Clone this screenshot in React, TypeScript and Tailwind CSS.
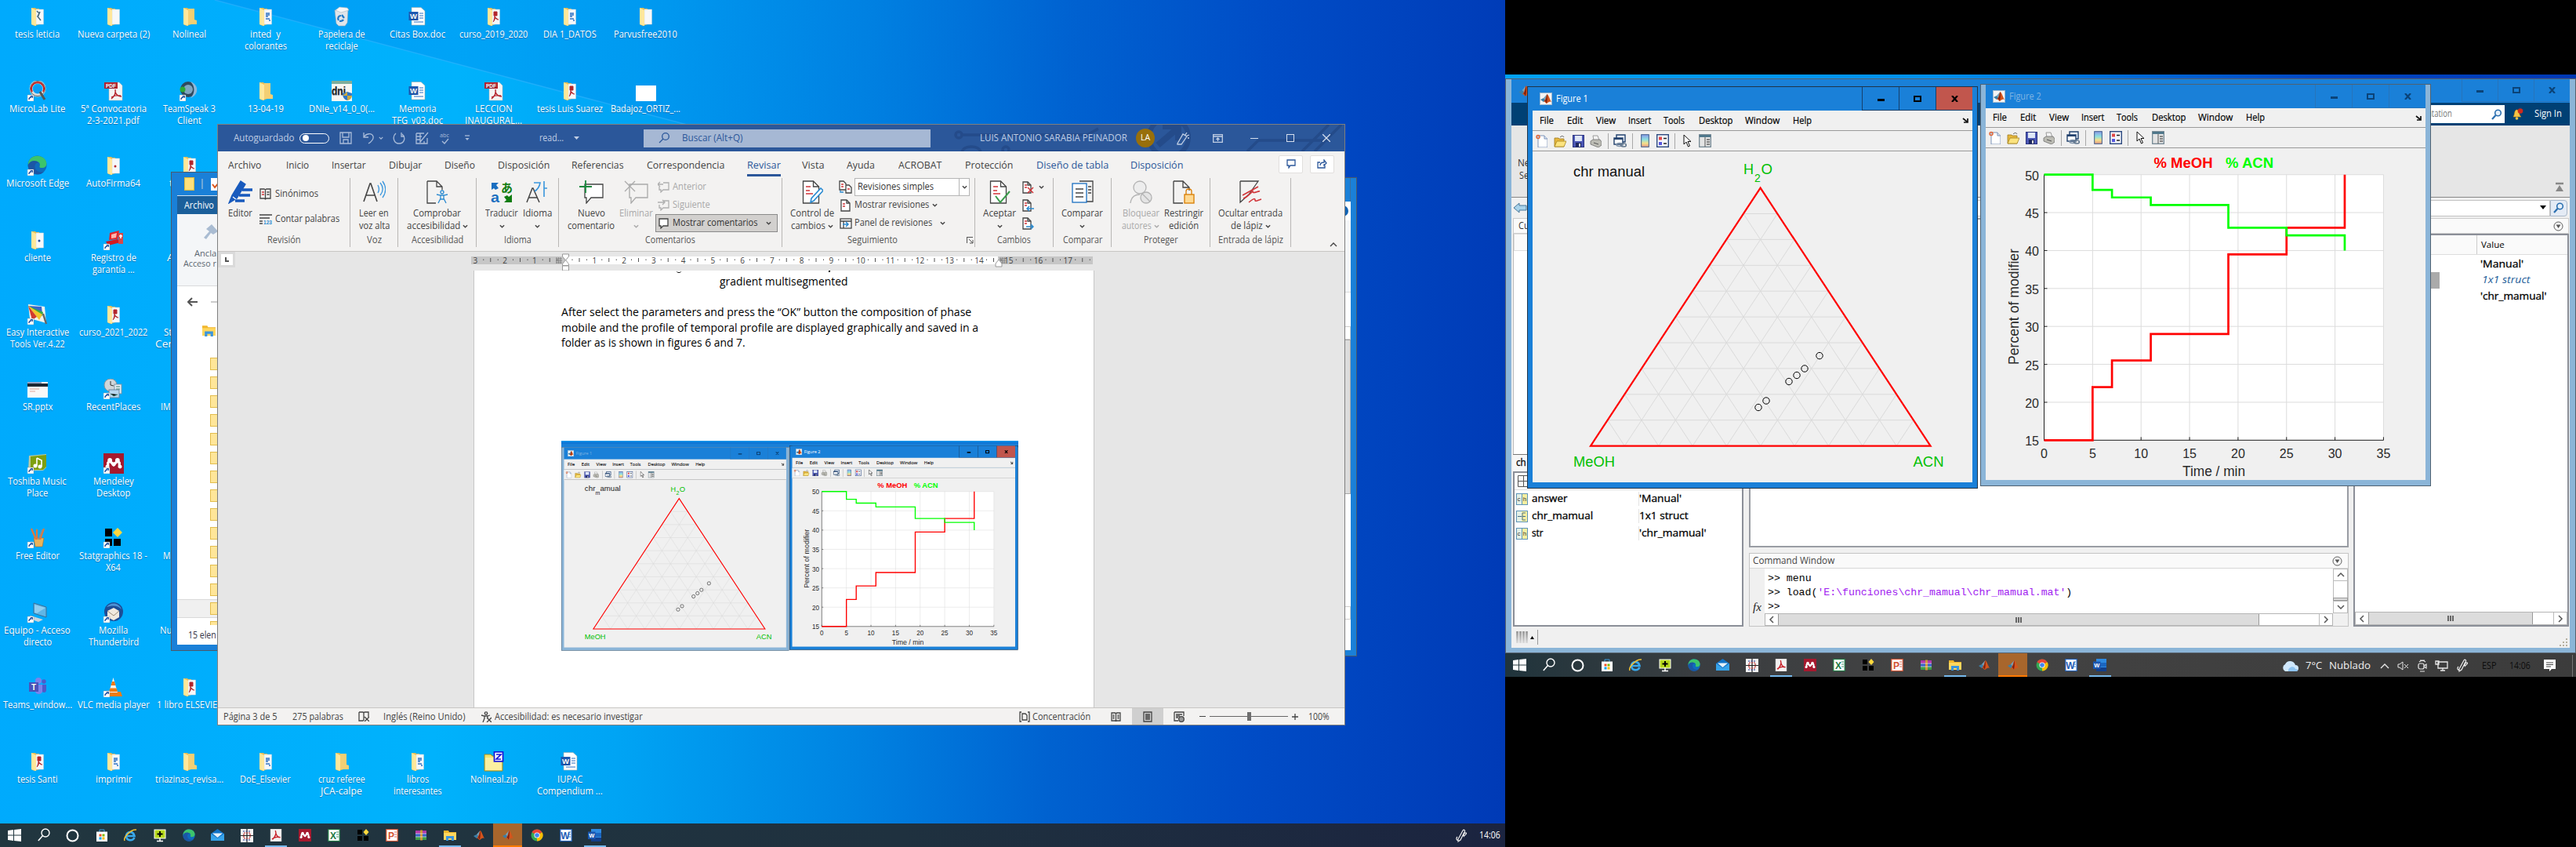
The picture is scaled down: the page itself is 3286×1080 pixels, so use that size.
import React, { useLayoutEffect, useRef } from "react";

type Node = React.ReactNode;

/* Text squeezed or stretched to a known advance width. */
function T({ w, c = "", children }: { w: number; c?: string; children: Node }) {
  const ref = useRef<HTMLSpanElement>(null);
  useLayoutEffect(() => {
    const el = ref.current;
    if (el && el.offsetWidth) el.style.transform = `scaleX(${w / el.offsetWidth})`;
  }, [w]);
  return (
    <span className={"inline-block shrink-0 whitespace-pre text-left " + c} style={{ width: w }}>
      <span ref={ref} className="inline-block origin-left">{children}</span>
    </span>
  );
}

/* A flex row whose items start at given offsets. Items: [start, width, node]. */
type Item = [number, number, Node];
function Line({ items, x = 0, c = "" }: { items: Item[]; x?: number; c?: string }) {
  let end = x;
  return (
    <div className={"flex items-center " + c}>
      {items.map(([s, w, n], i) => {
        const ml = s - end;
        end = s + w;
        return (
          <div key={i} className="flex shrink-0 items-center" style={{ width: w, marginLeft: ml }}>{n}</div>
        );
      })}
    </div>
  );
}
const txt = (s: number, w: number, t: Node, c = ""): Item => [s, w, <T w={w} c={c}>{t}</T>];

const Chev = ({ c = "text-[#444]", w = 7 }: { c?: string; w?: number }) => (
  <svg width={w} height={w} viewBox="0 0 8 8" className={"shrink-0 " + c}><path d="M1 2.5 4 5.5 7 2.5" fill="none" stroke="currentColor" strokeWidth="1.6" /></svg>
);

/* ---------- application icons ---------- */
function Matlab({ s = 16, box = false }: { s?: number; box?: boolean }) {
  return (
    <svg width={s} height={s} viewBox="0 0 16 16" className="shrink-0">
      {box && <rect x=".5" y=".5" width="15" height="15" fill="#f4f4f4" stroke="#9db8cf" />}
      <path d="M1 9 5 7 8 10 5 12z" fill="#3b7fa8" />
      <path d="M5 7 9.5 2 8 10z" fill="#6fa3c0" />
      <path d="M9.5 2C11.5 3 13 9 15 12 12 10 10 14 8.500 14 7 13 7 11 5 12 8 9 8 4 9.500 2z" fill="#d4541c" />
      <path d="M9.500 2C8.600 6 8.500 9 6.500 11 8 11 8 13 9 13.500 10 9 10 5 9.500 2z" fill="#7c1f10" />
    </svg>
  );
}
const Mendeley = ({ s = 16 }) => (
  <svg width={s} height={s} viewBox="0 0 16 16"><rect width="16" height="16" fill="#a6192e" /><path d="M3.500 11V7.500L5 6l3 3 3-3 1.500 1.500V11" fill="none" stroke="#fff" strokeWidth="2" /><circle cx="5" cy="5.500" r="1.800" fill="#fff" /><circle cx="11" cy="5.500" r="1.800" fill="#fff" /><circle cx="3" cy="10.500" r="1.500" fill="#fff" /><circle cx="13" cy="10.500" r="1.500" fill="#fff" /><circle cx="8" cy="8.500" r="1.600" fill="#fff" /></svg>
);
const Edge = ({ s = 16 }) => (
  <svg width={s} height={s} viewBox="0 0 16 16"><circle cx="8" cy="8" r="7.700" fill="#0f6cbd" /><path d="M.5 8C.5 3 4 .4 8 .4c5 0 7.600 3.400 7.600 6.400 0 2.400-2 3.500-4 3.500-1.600 0-2-.8-1.600-1.500C10.800 6.500 9 5 7 5 3.500 5 1 7 .5 8z" fill="#3cc46c" /><path d="M.5 8C2 4 7 3.500 9 6 6 6 5.500 8.500 6.500 11c1 2.500 4.500 3.500 7 2.200C11.500 16 5 17 2 12.500 1 11 .5 9.500.5 8z" fill="#1b56a5" /></svg>
);
const Stat = ({ s = 16 }) => (
  <svg width={s} height={s} viewBox="0 0 16 16"><path d="M1 1h6v6H1zM1 9h6v6H1zM9 9h6v6H9z" fill="#000" /><path d="m12 0 3.500 4L12 8 8.500 4z" fill="#ffd83d" /></svg>
);
const Pdf = ({ s = 16 }) => (
  <svg width={s} height={s} viewBox="0 0 16 16"><rect x="1" y="0" width="14" height="16" fill="#f3f1f1" stroke="#bbb" strokeWidth=".5" /><path d="M7.300 2C8.500 5 8 9 3.500 13.500M7.500 3C8 8 10 10.500 13.500 10.800 9 9.500 6 10 3 13" fill="none" stroke="#c8232c" strokeWidth="1.400" /></svg>
);
const Letter = ({ l, c, s = 16 }: { l: string; c: string; s?: number }) => (
  <svg width={s} height={s} viewBox="0 0 16 16"><rect x=".8" y=".5" width="14.400" height="15" fill="#fff" stroke={c} strokeWidth="1.200" /><path d="M11 4h3M11 7h3M11 10h3" stroke={c} strokeWidth=".8" /><text x="7" y="12.500" fontSize="12" fontWeight="700" textAnchor="middle" fill={c} fontFamily="Liberation Sans">{l}</text></svg>
);
const ExplorerIcon = ({ s = 16 }) => (
  <svg width={s} height={s} viewBox="0 0 16 16"><path d="M0 2h6l1 2h9v10H0z" fill="#f2b72c" /><path d="M0 5h16v9H0z" fill="#ffd75e" /><path d="M3 15V9h10v6h-3v-3H6v3z" fill="#3a95dd" /></svg>
);
const Rar = ({ s = 16 }) => (
  <svg width={s} height={s} viewBox="0 0 16 16"><rect x="1" y="2" width="14" height="4" fill="#b03aa8" /><rect x="1" y="6" width="14" height="4" fill="#3b62c4" /><rect x="1" y="10" width="14" height="4" fill="#3f9c4a" /><rect x="7" y="1.500" width="3" height="13" fill="#d0983a" /><path d="M1 6h14M1 10h14" stroke="#fff" strokeWidth=".6" /></svg>
);
const Chrome = ({ s = 16 }) => (
  <svg width={s} height={s} viewBox="0 0 16 16"><circle cx="8" cy="8" r="7.500" fill="#34a853" /><path d="M8 8 1.500 4.200A7.500 7.500 0 0 1 14.500 4.300z" fill="#ea4335" /><path d="M8 8l6.600-3.700A7.500 7.500 0 0 1 8 15.500z" fill="#fbbc05" /><circle cx="8" cy="8" r="3.600" fill="#fff" /><circle cx="8" cy="8" r="2.800" fill="#4285f4" /></svg>
);

/* ---------- desktop icons ---------- */
function Folder({ k }: { k: string }) {
  return (
    <svg width="26" height="26" viewBox="0 0 26 26">
      <path d="M5 2h5l1 1h4v20l-6 2-4-2z" fill="#e9bd55" />
      {k !== "n" && <rect x="11" y="4" width="9.500" height="19" fill="#f6f8fa" stroke="#c9d3da" strokeWidth=".5" />}
      {k === "n" && <path d="M11 3h8v14l3 1v5H11z" fill="#f3cf74" />}
      <path d="M5 2l6 3v20l-6-2z" fill="#ffe79b" />
      {k === "p" && <path d="M13 7h4v5h-4z M14 12c1 4 0 6-2 8M14 13c1 3 3 4 5 4" fill="#b3262d" stroke="#b3262d" strokeWidth="1" />}
      {k === "d" && <path d="M13 9h5M13 11h5M13 13h3M13 16h5M17 18h2" stroke="#2f72c4" strokeWidth="1.300" />}
      {k === "x" && <path d="M12 6l3 3-2 4 4 5M16 7l-3 7" stroke="#4c6b80" strokeWidth="1.600" fill="none" />}
      {k === "r" && <circle cx="15" cy="14" r="1.500" fill="#b3262d" />}
      {k === "b" && <circle cx="15" cy="14" r="1.500" fill="#234b9c" />}
    </svg>
  );
}
const Shortcut = () => (
  <g><rect x="0" y="18" width="8" height="8" fill="#fff" stroke="#888" strokeWidth=".4" /><path d="M2 24c0-2 1-3 3-3M3.800 19.600H6.300V22" fill="none" stroke="#1d4fa0" strokeWidth="1.300" /></g>
);
function DesktopGlyph({ k }: { k: string }) {
  if (k.startsWith("f") && k.length === 2) return <Folder k={k[1]} />;
  const svg = (n: Node, sc = false) => <svg width="26" height="26" viewBox="0 0 26 26">{n}{sc && <Shortcut />}</svg>;
  switch (k) {
    case "bin": return svg(<><path d="M4 5 21 3 20 21 17 25H9L6 22z" fill="#dfe5ea" stroke="#a3adb5" strokeWidth=".6" /><path d="M5 5 10 1 20 2 22 5 12 8z" fill="#f5f7f8" stroke="#a9b3ba" strokeWidth=".6" /><path d="M9 18c-2-3 0-6 3-6M13 11l3 4M15 17c-1 2-3 2-5 2" stroke="#1e78c8" strokeWidth="2.200" fill="none" /></>);
    case "doc": return svg(<><path d="M5 1.500H17L22 6V24H5z" fill="#fff" stroke="#9aa" strokeWidth=".6" /><path d="M15 9h5M15 12h5M15 15h5M8 20h12" stroke="#2b6fc2" /><rect x="1.500" y="7" width="12" height="11" fill="#1e58b0" /><text x="7.500" y="16" fontSize="9.500" fontWeight="700" fill="#fff" textAnchor="middle" fontFamily="Liberation Sans">W</text></>);
    case "pdf": return svg(<><path d="M4 2H20L24 6V25H7V10z" fill="#f4f4f4" stroke="#b5b5b5" strokeWidth=".5" /><rect x="1" y="2" width="17" height="8" fill="#b4232c" /><text x="9.500" y="8.500" fontSize="6.500" fontWeight="700" fill="#fff" textAnchor="middle" fontFamily="Liberation Sans">PDF</text><path d="M15 11c1 5-1 9-5 12M15 14c1 4 4 6 8 6M10 21c3-2 7-3 12-2" fill="none" stroke="#b4232c" strokeWidth="1.400" /></>);
    case "micro": return svg(<><circle cx="13" cy="10" r="8.500" fill="none" stroke="#ddd" strokeWidth="4" /><circle cx="13" cy="10" r="9.500" fill="none" stroke="#666" strokeWidth="1" /><path d="M6 14A8 8 0 1 1 20 14" stroke="#c62020" strokeWidth="2" fill="none" /><circle cx="13" cy="11" r="5" fill="#0a9df5" /><path d="M16 14l6 10" stroke="#555" strokeWidth="3" /></>, true);
    case "team": return svg(<><circle cx="11" cy="11" r="10" fill="#2f4a5f" /><path d="M14 1c11 4 11 17 0 21 6-6 6-15 0-21z" fill="#8fb8da" /><circle cx="11" cy="11" r="6" fill="#7fa6c0" /><circle cx="4" cy="11" r="3.500" fill="#2ba836" /></>, true);
    case "dni": return svg(<><rect width="26" height="26" fill="#f7f7f2" /><path d="M0 0h26v4H0z" fill="#7fae9b" /><text x="0" y="18" fontSize="15" fontWeight="700" fill="#222" textLength="18" lengthAdjust="spacingAndGlyphs" fontFamily="Liberation Sans">dni</text><path d="M20 14l6 2c0 6-2 8-6 9-4-1-6-4-6-9z" fill="#2f77c8" /><path d="M20 14v11c4-1 6-4 6-6h-12" fill="#f4b41a" opacity=".8" /></>);
    case "file": return svg(<rect y="6" width="26" height="20" fill="#fff" />);
    case "edge": return <div className="relative h-[26px] w-[26px]"><Edge s={25} /><svg className="absolute left-0 top-0" width="26" height="26" viewBox="0 0 26 26"><Shortcut /></svg></div>;
    case "reg": return svg(<><path d="M8 4 20 1 18 12 7 13z" fill="#e0262c" /><path d="M10 6l7-2-1 6-6 1z" fill="#ffb6b0" /><path d="M3 15 18 12 22 16 6 20z" fill="#d3191f" /><path d="M19 4h6v14h-6z" fill="#d94848" /><path d="M20 8h4M22 6v5" stroke="#fff" strokeWidth="1.500" /></>, true);
    case "easy": return svg(<><path d="M1 0 22 3 24 24 3 18z" fill="#f3f3ee" /><path d="M1 2 18 3 19 12z" fill="#3a66c8" /><path d="M1 2 20 10 19 15z" fill="#38a848" /><path d="M1 2 19 13 15 20z" fill="#f1c52c" /><path d="M1 2 12 16 6 20z" fill="#d23a2d" /><path d="M20 12l4 13" stroke="#666" strokeWidth="2.500" /></>, true);
    case "sr": return svg(<><rect y="4" width="26" height="20" fill="#f8f8f8" /><rect y="6" width="26" height="4" fill="#1d2733" /><rect y="4" width="18" height="2" fill="#8fa4c8" /><path d="M3 13h12M3 16h7" stroke="#e0a79b" /></>);
    case "recent": return svg(<><circle cx="9" cy="8" r="8" fill="#cfd6da" stroke="#8a959c" /><path d="M9 3v5l4 1" stroke="#333" fill="none" /><rect x="14" y="7" width="9" height="12" fill="#e8f1f8" stroke="#7f94a5" /><rect x="7" y="14" width="13" height="10" fill="#b9d7ef" stroke="#6d86a0" /><path d="M16 10h5M16 13h5M9 19l4 3 5-2" stroke="#3a7b6a" /></>, true);
    case "tosh": return svg(<><path d="M2 3 24 1V18L20 22H1z" fill="#b9c9a0" /><path d="M4 4 24 2V17L20 21H4z" fill="#7e9f10" /><path d="M12 6l6 3v8M12 6v10" stroke="#fff" strokeWidth="1.600" fill="none" /><circle cx="10" cy="16" r="2.500" fill="#fff" /><circle cx="16" cy="17" r="2.500" fill="#fff" /></>, true);
    case "mend": return <div className="relative h-[26px] w-[26px]"><Mendeley s={26} /><svg className="absolute left-0 top-0" width="26" height="26" viewBox="0 0 26 26"><Shortcut /></svg></div>;
    case "free": return svg(<><path d="M8 13h13l-2 11H10z" fill="#e9b35a" stroke="#a9702a" strokeWidth=".6" /><path d="M5 1l6 14M12 2v13M21 1l-5 14" stroke="#e2773a" strokeWidth="2.200" /><path d="M19 2l-5 13" stroke="#7d8fa0" strokeWidth="1.600" /></>, true);
    case "stat": return svg(<><path d="M2 1h9v10H2zM2 14h9v9H2zM13 14h9v9h-9z" fill="#000" /><path d="m18 0 6 6-6 6-6-6z" fill="#ffd83d" /></>, true);
    case "pc": return svg(<><path d="M8 1 24 6V19L8 14z" fill="#5fb6e6" stroke="#3c6f98" /><path d="M9 3 23 7 12 14 9 13z" fill="#a6d9f4" opacity=".7" /><path d="M4 17 20 22 14 25 0 20z" fill="#c9d5dd" /></>, true);
    case "thun": return svg(<><ellipse cx="13" cy="12" rx="12" ry="12" fill="#1d4d96" /><path d="M4 6C9-1 20 0 23 9 18 3 10 4 4 6z" fill="#4d93d6" /><path d="M5 11l8-4 7 4v8l-7 4-8-4z" fill="#efe9df" /><path d="M5 11l8 6 7-6" stroke="#9a8b7a" fill="none" /></>, true);
    case "teams": return svg(<><circle cx="14" cy="5" r="4" fill="#7b83eb" /><circle cx="21" cy="6" r="2.700" fill="#5059c9" /><path d="M9 10h10v9c-1 4-8 4-9 0z" fill="#7b83eb" /><path d="M19 10h5v7c0 3-3 4-5 2z" fill="#5059c9" /><rect x="2" y="7" width="12" height="12" fill="#4b53bc" /><text x="8" y="16.500" fontSize="10" fontWeight="700" textAnchor="middle" fill="#fff" fontFamily="Liberation Sans">T</text></>);
    case "vlc": return svg(<><path d="M3 19h19l2 6H1z" fill="#f07c12" /><path d="M12.500 1 18 20H7z" fill="#f5f5f5" /><path d="M11 6h3l1.500 5h-6zM8.500 14.500h8L18 19H7z" fill="#ef7a10" /></>, true);
    case "zip": return svg(<><path d="M1 4h8l2 2h13v19H1z" fill="#f4e46c" stroke="#9c8a28" /><path d="M2 8h21v16H2z" fill="#fbf0a0" /><rect x="13.500" y=".8" width="11" height="12" fill="#fff" stroke="#1616d8" strokeWidth="1.700" /><path d="M16 4h6l-6 6h6" fill="none" stroke="#1616d8" strokeWidth="1.700" /></>);
    default: return svg(null);
  }
}

type Cell = [string, [string, number][]] | null;
const desktop: Cell[][] = [
  [["fx", [["tesis leticia", 57]]], ["fw", [["Nueva carpeta (2)", 92]]], ["fn", [["Nolineal", 43]]], ["fd", [["inted  y", 39], ["colorantes", 54]]], ["bin", [["Papelera de", 60], ["reciclaje", 42]]], ["doc", [["Citas Box.doc", 71]]], ["fp", [["curso_2019_2020", 87]]], ["fd", [["DIA 1_DATOS", 68]]], ["fw", [["Parvusfree2010", 81]]]],
  [["micro", [["MicroLab Lite", 71]]], ["pdf", [["5ª Convocatoria", 84], ["2-3-2021.pdf", 67]]], ["team", [["TeamSpeak 3", 67], ["Client", 31]]], ["fn", [["13-04-19", 46]]], ["dni", [["DNIe_v14_0_0(...", 84]]], ["doc", [["Memoria", 47], ["TFG_v03.doc", 65]]], ["pdf", [["LECCION", 48], ["INAUGURAL...", 73]]], ["fp", [["tesis Luis Suarez", 84]]], ["file", [["Badajoz_ORTIZ_...", 89]]]],
  [["edge", [["Microsoft Edge", 80]]], ["fr", [["AutoFirma64", 69]]], ["fp", [["tesis Leti", 52]]]],
  [["fb", [["cliente", 34]]], ["reg", [["Registro de", 58], ["garantía ...", 54]]], ["", [["Artículos", 58]]]],
  [["easy", [["Easy Interactive", 80], ["Tools Ver.4.22", 70]]], ["fp", [["curso_2021_2022", 87]]], ["", [["Statgraphics", 66], ["Centurion XVI", 87]]]],
  [["sr", [["SR.pptx", 38]]], ["recent", [["RecentPlaces", 69]]], ["", [["IMPRIMIR 2020", 74]]]],
  [["tosh", [["Toshiba Music", 75], ["Place", 27]]], ["mend", [["Mendeley", 52], ["Desktop", 43]]], null],
  [["free", [["Free Editor", 56]]], ["stat", [["Statgraphics 18 -", 87], ["X64", 19]]], ["", [["Material 2021", 67]]]],
  [["pc", [["Equipo - Acceso", 85], ["directo", 36]]], ["thun", [["Mozilla", 37], ["Thunderbird", 64]]], ["", [["Nueva carpeta", 76]]]],
  [["teams", [["Teams_window...", 88]]], ["vlc", [["VLC media player", 92]]], ["fp", [["1 libro ELSEVIER", 84]]]],
  [["fp", [["tesis Santi", 52]]], ["fd", [["imprimir", 46]]], ["fn", [["triazinas_revisa...", 87]]], ["fd", [["DoE_Elsevier", 65]]], ["fn", [["cruz referee", 60], ["JCA-calpe", 53]]], ["fd", [["libros", 28], ["interesantes", 62]]], ["zip", [["Nolineal.zip", 60]]], ["doc", [["IUPAC", 32], ["Compendium ...", 84]]]],
];
function DesktopIcons() {
  return (
    <div className="flex flex-col text-[12px] leading-[15px] text-white">
      {desktop.map((row, i) => (
        <div key={i} className="flex h-[95px]">
          {row.map((c, j) => (
            <div key={j} className="flex w-[97px] flex-col items-center pt-[8px] [text-shadow:0_1px_1px_rgba(0,40,90,.45)]">
              {c && <>
                <div className="mb-[2px] h-[26px]"><DesktopGlyph k={c[0]} /></div>
                {c[1].map(([t, w]) => <T key={t} w={w} c="h-[15px]">{t}</T>)}
              </>}
            </div>
          ))}
        </div>
      ))}
    </div>
  );
}

/* ---------- taskbar ---------- */
const WinLogo = () => <svg width="17" height="16" viewBox="0 0 17 16"><path d="M0 2 7 1v6.500H0zM8 .9 17 0v7.500H8zM0 8.500h7V15L0 14zM8 8.500h9V16l-9-.9z" fill="#fff" /></svg>;
const PenIcon = () => (
  <svg width="15" height="17" viewBox="0 0 15 17"><path d="M3 13 9 2c1-1.500 3-.5 2.500 1L6 14l-3 2zM2 10c-2 2-1 5 2 5M10 9c3-1 5-5 2-4-2 1-3 4-1 5" fill="none" stroke="#eee" strokeWidth="1.200" /></svg>
);
function Taskbar({ tray }: { tray: Node }) {
  const icons: Node[] = [
    <WinLogo />,
    <svg width="16" height="18" viewBox="0 0 16 18"><circle cx="10" cy="6" r="5" fill="none" stroke="#fff" strokeWidth="1.400" /><path d="M6.500 9.500.8 16" stroke="#fff" strokeWidth="1.500" /></svg>,
    <svg width="17" height="17" viewBox="0 0 17 17"><circle cx="8.500" cy="8.500" r="7" fill="none" stroke="#fff" strokeWidth="2" /></svg>,
    <svg width="16" height="17" viewBox="0 0 16 17"><path d="M5 4V1h6v3" fill="none" stroke="#3b9fe0" /><rect x="1" y="3.500" width="14" height="12.500" fill="#fff" /><path d="M4.500 6.500h3v3h-3z" fill="#f25022" /><path d="M8.500 6.500h3v3h-3z" fill="#7fba00" /><path d="M4.500 10.500h3v3h-3z" fill="#00a4ef" /><path d="M8.500 10.500h3v3h-3z" fill="#ffb900" /></svg>,
    <svg width="17" height="17" viewBox="0 0 17 17"><path d="M13.500 11C11 16 3 15 3 9s9-7 10.500 0H4" fill="none" stroke="#39a9ec" strokeWidth="2.600" /><path d="M1 15C-1 11 9 0 16 1" fill="none" stroke="#f3c232" strokeWidth="1.500" /></svg>,
    <svg width="16" height="17" viewBox="0 0 16 17"><rect x="1" y="1" width="14" height="11" fill="#b6d81c" stroke="#fff" strokeWidth="1" /><path d="M8 3v7M4.500 6.500h7" stroke="#000" strokeWidth="2" /><path d="M8 12v3M4 15.500h8" stroke="#fff" strokeWidth="1.500" /></svg>,
    <Edge />,
    <svg width="17" height="16" viewBox="0 0 17 16"><path d="M0 6 8.500 0 17 6v9H0z" fill="#1173c7" /><path d="M2 5.500h13L8.500 11z" fill="#e6f2fb" /><path d="M0 6l8.500 6L17 6v9H0z" fill="#36a3ea" /></svg>,
    <svg width="16" height="17" viewBox="0 0 16 17"><rect width="16" height="17" fill="#f3f3f3" /><path d="M8 0v17M0 8.500h16" stroke="#222" strokeWidth="1.200" /><rect x="4" y="5" width="8" height="7" fill="none" stroke="#c03030" strokeWidth="1.200" strokeDasharray="2 1" /><path d="M3 3h10M3 14h10" stroke="#223a9a" strokeDasharray="2 1.500" /></svg>,
    <Pdf />, <Mendeley />, <Letter l="X" c="#1f7a44" />, <Stat />, <Letter l="P" c="#d35230" />, <Rar />, <ExplorerIcon />, <Matlab />, <Matlab />, <Chrome />, <Letter l="W" c="#1f5fb8" />,
    <svg width="17" height="16" viewBox="0 0 17 16"><rect x="4" width="13" height="16" fill="#2f8ae0" /><path d="M4 5h13v5H4z" fill="#1b66c0" /><path d="M4 11h13v5H4z" fill="#123f8c" /><rect y="3.500" width="9.500" height="9.500" fill="#1a56b0" /><text x="4.800" y="11" fontSize="7.500" fontWeight="700" textAnchor="middle" fill="#fff" fontFamily="Liberation Sans">W</text></svg>,
  ];
  const on = [9, 15, 20];
  return (
    <div className="flex h-[30px] w-full items-stretch">
      {icons.map((ic, i) => (
        <div key={i} className={"flex w-[37px] shrink-0 flex-col items-center justify-between " + (i === 17 ? "bg-[#a8662c]" : "")}>
          <div className="flex h-[28px] items-center pt-[2px]">{ic}</div>
          <div className={"h-[2px] " + (i === 17 ? "w-[37px] bg-[#ff7a00]" : on.includes(i) ? "w-[28px] bg-[#76b9ed]" : "w-[28px]")} />
        </div>
      ))}
      <div className="flex-1" />
      {tray}
    </div>
  );
}

/* ---------- MATLAB figure windows ---------- */
const CapBtns = ({ on, w, h }: { on: boolean; w: string; h: string }) => (
  <div className={"flex text-black " + (on ? "" : "opacity-70")}>
    <div className={"flex items-center justify-center border-b border-l " + w + h + (on ? " border-[#17406c]" : " border-[#2d6fae]")}><div className={"mt-[3px] h-[3px] w-[9px] " + (on ? "bg-black" : "bg-[#052a50]")} /></div>
    <div className={"flex items-center justify-center border-b border-l " + w + h + (on ? " border-[#17406c]" : " border-[#2d6fae]")}><div className={"h-[8px] w-[10px] border-2 " + (on ? "border-black" : "border-[#052a50]")} /></div>
    <div className={"flex items-center justify-center border-b border-l " + w + h + (on ? " border-[#17406c] bg-[#c1564d]" : " border-[#2d6fae]")}><svg width="9" height="8" viewBox="0 0 9 8"><path d="M1 0 8 8M8 0 1 8" stroke={on ? "#000" : "#052a50"} strokeWidth="2.200" /></svg></div>
  </div>
);

function Toolbar() {
  return (
    <Line c="h-[26px] shrink-0 border-b border-[#9a9a9a] bg-[#f0f0f0] shadow-[0_1px_0_#fff]" x={7} items={[
      [11, 15, <svg width="15" height="17" viewBox="0 0 15 17"><path d="M3 2h8l4 4v11H3z" fill="#fff" stroke="#7c93b8" /><path d="M11 2v4h4" fill="#dbe5f4" stroke="#7c93b8" /><circle cx="3" cy="3.500" r="2" fill="none" stroke="#e2683a" strokeWidth="1.500" /></svg>],
      [34, 16, <svg width="16" height="16" viewBox="0 0 16 16"><path d="M1 4h5l1 1h6v10H1z" fill="#e6b73e" stroke="#9c7a1c" strokeWidth=".8" /><path d="M1 15 4 8h12l-3 7z" fill="#fbe37f" stroke="#a8861f" strokeWidth=".8" /><path d="M8 3c2-2 4-2 5 0" stroke="#555" fill="none" /></svg>],
      [58, 15, <svg width="15" height="16" viewBox="0 0 15 16"><rect x=".5" y=".5" width="14" height="15" fill="#4b57b5" stroke="#2b3480" /><rect x="3" y="1" width="9" height="7" fill="#dfe7f7" /><rect x="4" y="10" width="7" height="5.500" fill="#1f2860" /><rect x="8" y="11" width="2" height="4" fill="#ddd" /></svg>],
      [80, 15, <svg width="15" height="16" viewBox="0 0 15 16"><path d="M4 1h6l2 6H5z" fill="#f4f4f4" stroke="#888" strokeWidth=".8" /><path d="M1 8 4 6h9l2 3v4l-4 3-10-4z" fill="#bcbcb4" stroke="#6e6e6e" strokeWidth=".8" /><path d="M5 10l6 2" stroke="#555" /></svg>],
      [103, 1, <div className="h-[20px] w-px bg-[#a8a8a8]" />],
      [110, 17, <svg width="17" height="17" viewBox="0 0 17 17"><path d="M4 1h11v9H4z" fill="#eaf1fb" stroke="#23426e" strokeWidth="1.400" /><path d="M1 5h11v8H1z" fill="#fff" stroke="#23426e" strokeWidth="1.400" /><path d="M1 6h11" stroke="#23426e" strokeWidth="2" /><ellipse cx="8" cy="13.500" rx="4" ry="2" fill="none" stroke="#7f93a9" strokeWidth="1.600" /><ellipse cx="13" cy="14" rx="3.500" ry="2" fill="none" stroke="#60758c" strokeWidth="1.600" /></svg>],
      [134, 1, <div className="h-[20px] w-px bg-[#a8a8a8]" />],
      [145, 11, <svg width="11" height="17" viewBox="0 0 11 17"><defs><linearGradient id="cb" x1="0" x2="0" y1="0" y2="1"><stop offset="0" stopColor="#8c9ae8" /><stop offset=".4" stopColor="#8be0e0" /><stop offset=".7" stopColor="#f4e08a" /><stop offset="1" stopColor="#e89a86" /></linearGradient></defs><rect x=".7" y=".7" width="9.600" height="15.600" fill="url(#cb)" stroke="#3b5b8a" /></svg>],
      [165, 16, <svg width="16" height="17" viewBox="0 0 16 17"><rect x=".7" y=".7" width="14.600" height="15.600" fill="#f4f6fb" stroke="#2d4a80" strokeWidth="1.400" /><rect x="3" y="3.500" width="4" height="4" fill="#e04848" /><rect x="3" y="10" width="4" height="4" fill="#5757dd" /><path d="M9 5.500h4M9 12h4" stroke="#222" strokeWidth="1.300" /></svg>],
      [188, 1, <div className="h-[20px] w-px bg-[#a8a8a8]" />],
      [199, 11, <svg width="11" height="17" viewBox="0 0 11 17"><path d="M1 1v12l3-3 2.500 6 2-1L6 9.500h4z" fill="#fff" stroke="#111" /></svg>],
      [219, 16, <svg width="16" height="17" viewBox="0 0 16 17"><rect x=".7" y=".7" width="14.600" height="15.600" fill="#e4e4e4" stroke="#6a7f8c" strokeWidth="1.200" /><path d="M1 2.500h14" stroke="#3c6a80" strokeWidth="2.500" /><path d="M8 4v12" stroke="#555" /><path d="M10 7h4M10 10h4M10 13h4" stroke="#222" strokeWidth="1.200" /></svg>],
    ]} />
  );
}

function FigureWindow({ on, n, shift, children }: { on: boolean; n: number; shift: number; children: Node }) {
  return (
    <div className={"flex h-[513px] w-[575px] flex-col border px-[6px] pb-[7px] " + (on ? "border-[#203448] bg-[#1a80d8]" : "border-[#4f6272] bg-[#8bb5d8]")}>
      <div className="flex h-[30px] shrink-0 items-start justify-between bg-[#1a80d8]">
        <div className={"flex h-[30px] items-center gap-[5px] pl-[9px] text-[12px] " + (on ? "text-white" : "text-[#80b4e2]")}>
          <Matlab s={16} box /><T w={41}>{"Figure " + n}</T>
        </div>
        <CapBtns on={on} w="w-[47px] " h="h-[30px]" />
      </div>
      <Line x={7} c={"shrink-0 border-b border-[#9a9a9a] bg-[#f0f0f0] text-[12px] text-black [-webkit-text-stroke:0.2px_#000] " + (shift ? "h-[26px]" : "h-[25px]")} items={[
        txt(16, 18, "File"), txt(51, 20, "Edit"), txt(88, 25, "View"), txt(129, 29, "Insert"), txt(174, 27, "Tools"), txt(219, 43, "Desktop"), txt(278, 44, "Window"), txt(339, 24, "Help"),
        [555, 8, <svg width="8" height="7" viewBox="0 0 8 7"><path d="M1 1 6 5M7 1v5H2" stroke="#111" strokeWidth="1.700" fill="none" /></svg>],
      ]} />
      <Toolbar />
      <div className="flex-1 overflow-hidden bg-[#f0f0f0]">{children}</div>
    </div>
  );
}

/* Plot drawings use the window's own coordinates; the view box skips frame and bars. */
function Ternary({ label }: { label: Node }) {
  const A = [297.6, 129.6], B = [81, 458.6], C = [514.6, 458.6];
  const p = (a: number[], b: number[], t: number) => [a[0] + (b[0] - a[0]) * t, a[1] + (b[1] - a[1]) * t];
  const seg = (u: number[], v: number[]) => `M${u[0]} ${u[1]}L${v[0]} ${v[1]}`;
  let d = "";
  for (let i = 1; i < 10; i++) {
    const t = i / 10;
    d += seg(p(A, B, t), p(A, C, t)) + seg(p(B, A, t), p(B, C, t)) + seg(p(C, A, t), p(C, B, t));
  }
  return (
    <svg width="561" height="421" viewBox="7 83 561 421" fontFamily="Liberation Sans" fontSize="18">
      <path d={d} stroke="#dadada" fill="none" />
      <path d={`M${A}L${B}L${C}Z`} stroke="#f00" strokeWidth="2.200" fill="none" />
      {[[295, 409.5], [305, 401], [334, 376.500], [344, 368.500], [354, 360], [373, 343.600]].map(([x, y]) => <circle key={x} cx={x} cy={y} r="4.200" fill="none" stroke="#000" />)}
      {label}
      <g fill="#00c000">
        <text x="276" y="112" textLength="13" lengthAdjust="spacingAndGlyphs">H</text><text x="290" y="121.500" fontSize="14">2</text><text x="298.500" y="112" textLength="14.500" lengthAdjust="spacingAndGlyphs">O</text>
        <text x="59" y="484.500" textLength="53" lengthAdjust="spacingAndGlyphs">MeOH</text>
        <text x="492.500" y="484.500" textLength="39" lengthAdjust="spacingAndGlyphs">ACN</text>
      </g>
    </svg>
  );
}
function Profile() {
  const X = (t: number) => 81.500 + t * 12.370, Y = (v: number) => 454.300 - (v - 15) * 9.674;
  const step = (pts: number[][]) => pts.map(([t, v], i) => (i ? `H${X(t)}V${Y(v)}` : `M${X(t)} ${Y(v)}`)).join("");
  const xs = [0, 5, 10, 15, 20, 25, 30, 35], ys = [15, 20, 25, 30, 35, 40, 45, 50];
  return (
    <svg width="561" height="421" viewBox="7 82 561 421" fontFamily="Liberation Sans" fontSize="16" fill="#2a2a2a">
      <rect x={X(0)} y={Y(50)} width={X(35) - X(0)} height={Y(15) - Y(50)} fill="#fff" />
      <path d={xs.map((x) => `M${X(x)} ${Y(50)}V${Y(15)}`).join("") + ys.map((y) => `M${X(0)} ${Y(y)}H${X(35)}`).join("")} stroke="#dcdcdc" />
      <path d={`M${X(0)} ${Y(50)}V${Y(15)}H${X(35)}` + xs.map((x) => `M${X(x)} ${Y(15)}v-4`).join("") + ys.map((y) => `M${X(0)} ${Y(y)}h4`).join("")} stroke="#222" fill="none" />
      <path d={step([[0, 15], [5, 22], [7, 25.5], [11, 29], [19, 39.5], [25, 43], [31, 50]])} stroke="#f00" strokeWidth="2.700" fill="none" />
      <path d={step([[0, 50], [5, 48], [7, 47], [11, 46], [19, 43], [25, 42], [31, 40]])} stroke="#0f0" strokeWidth="2.700" fill="none" />
      {xs.map((x) => <text key={x} x={X(x)} y="477" textAnchor="middle">{x}</text>)}
      {ys.map((y) => <text key={y} x="75" y={Y(y) + 7} textAnchor="end">{y}</text>)}
      <g fontWeight="700" fontSize="18"><text x="221.500" y="107" fill="#f00" textLength="75" lengthAdjust="spacingAndGlyphs">% MeOH</text><text x="313" y="107" fill="#0f0" textLength="61" lengthAdjust="spacingAndGlyphs">% ACN</text></g>
      <text x="258" y="500" fontSize="17.500" textLength="80" lengthAdjust="spacingAndGlyphs">Time / min</text>
      <text transform="translate(49 358) rotate(-90)" fontSize="17.500" textLength="148" lengthAdjust="spacingAndGlyphs">Percent of modifier</text>
    </svg>
  );
}

/* ---------- Word ---------- */
const Sheet = ({ red = true }: { red?: boolean }) => <><path d="M1.500 1h13l7 7v21h-20z" fill="#fff" stroke="#444" strokeWidth="1.300" /><path d="M14.500 1v7h7" fill="none" stroke="#444" strokeWidth="1.300" />{red && <path d="M5 8h6M5 13h5M5 17h9" stroke="#d13438" strokeWidth="1.400" />}</>;
const I = ({ w, h = 30, b, children }: { w: number; h?: number; b?: string; children: Node }) => <svg width={w} height={h} viewBox={b ?? `0 0 ${w} ${h}`} className="shrink-0" fill="none" stroke="#444" strokeWidth="1.300">{children}</svg>;
const Bubble = ({ gray = false, x = false }) => (
  <I w={31}><path d="M7 5H30V22H15L9 29V22H7z" fill={gray ? "none" : "#fff"} stroke={gray ? "#a9a9a9" : "#444"} />{x ? <path d="M1 1 14 14M14 1 1 14" stroke="#aaa" /> : <path d="M8 0v16M0 8h16" stroke="#1b8a3f" strokeWidth="1.800" />}</I>
);

function Big({ icon, a, b, chev, dim, w }: { icon: Node; a: [string, number]; b?: [string, number]; chev?: boolean; dim?: boolean; w: number }) {
  return (
    <div className={"flex flex-col items-center text-[12.500px] leading-[16px] " + (dim ? "text-[#a9a9a9]" : "text-[#444]")} style={{ width: w }}>
      <div className="mt-[3px] mb-[4px] flex h-[30px] items-center">{icon}</div>
      <T w={a[1]} c="h-[16px]">{a[0]}</T>
      <div className="flex h-[16px] items-center gap-[3px]">{b && <T w={b[1]}>{b[0]}</T>}{chev && <Chev c="" />}</div>
    </div>
  );
}
function Group({ w, label, lw, children, launcher }: { w: number; label: string; lw: number; children: Node; launcher?: boolean }) {
  return (
    <div className="flex h-[88px] shrink-0 flex-col border-r border-[#b9b7b5]" style={{ width: w }}>
      <div className="flex h-[75px] items-start">{children}</div>
      <div className={"flex h-[18px] items-center justify-center text-[12px] text-[#555] " + (launcher ? "pr-[15px]" : "")}><T w={lw}>{label}</T>{launcher && <div className="ml-[88px] -mr-[96px] h-[8px] w-[8px] border-l border-t border-[#555]"><svg width="8" height="8" viewBox="0 0 8 8"><path d="M2 2l5 5M7 3v4H3" stroke="#555" fill="none" /></svg></div>}</div>
    </div>
  );
}

function Ribbon() {
  const small = "h-[23px] text-[12.500px] text-[#444]";
  return (
    <div className="flex h-[93px] items-start">
      <Group w={169} label="Revisión" lw={43}>
        <Line c="items-start" x={277} items={[
          [284, 43, <Big w={43} icon={<I w={31}><path d="M1 29 5 19 16 1l6 4-11 18z" fill="#185abd" stroke="#185abd" /><path d="M6 21l5 4" stroke="#fff" /><path d="M18 12h13M14 19h14M9 26h12" stroke="#185abd" strokeWidth="3.500" /></I>} a={["Editor", 31]} />],
          [330, 110, <div className="flex flex-col pt-[9px]">
            <Line c="h-[23px] text-[12.500px] text-[#444]" x={330} items={[[330, 15, <I w={15} h={15}><path d="M1 1h5l1.500 1L9 1h5v12H9l-1.500 1L6 13H1zM7.500 2v12" /><path d="M3 5h3M3 8h3" stroke="#d13438" /><path d="M9.500 5h3M9.500 8h3" /></I>], txt(350, 55, "Sinónimos")]} />
            <Line c="mt-[9px] h-[23px] text-[12.500px] text-[#444]" x={330} items={[[330, 16, <I w={16} h={14}><path d="M0 1h16M0 5h13M0 9h4M0 12h4" /><text x="5" y="13" fontSize="8" fontWeight="700" stroke="none" fill="#2b8ad0" textLength="11" lengthAdjust="spacingAndGlyphs" fontFamily="Liberation Sans">123</text></I>], txt(350, 82, "Contar palabras")]} />
          </div>],
        ]} />
      </Group>
      <Group w={61} label="Voz" lw={19}><Big w={60} icon={<I w={29}><path d="M1 27 9 4h1l8 23M4 19h11" strokeWidth="1.600" /><path d="M19 6c2 4 2 7 0 10M22 3c4 5 4 11 0 16M25 1c5 7 5 14 0 21" stroke="#3a96dd" /></I>} a={["Leer en", 38]} b={["voz alta", 39]} /></Group>
      <Group w={100} label="Accesibilidad" lw={66}><Big w={99} icon={<I w={28}><path d="M1 1h12l7 7v4M1 1v28h11M13 1v7h7" /><circle cx="20" cy="15" r="2" stroke="#2b8ad0" /><path d="M13 18l5 1v4l-3 6M27 18l-5 1v4l3 6M18 19h4M18 24h4" stroke="#2b8ad0" /></I>} a={["Comprobar", 61]} b={["accesibilidad", 68]} chev /></Group>
      <Group w={105} label="Idioma" lw={35}>
        <Line c="items-start" x={607} items={[
          [616, 46, <Big w={46} icon={<I w={28}><path d="M1 12V3h9l-3 3 3 4-4 2-2-2z" fill="#1a6ec0" stroke="none" /><text x="0" y="28" fontSize="19" fontWeight="700" stroke="none" fill="#1a6ec0" textLength="11" lengthAdjust="spacingAndGlyphs" fontFamily="Liberation Sans">a</text><text x="13" y="15" fontSize="15" fontWeight="700" stroke="none" fill="#107c10" fontFamily="Noto Sans CJK JP">あ</text><path d="M27 18v10H17l3-3-3-4 4-2 2 2z" fill="#107c10" stroke="none" /></I>} a={["Traducir", 42]} chev />],
          [662, 44, <Big w={44} icon={<I w={28}><path d="M1 28 8 10h1l8 18M4 22h10" strokeWidth="1.500" /><path d="M10 3h8c-1 6-4 9-7 11M23 1v20M23 10h4" stroke="#3a96dd" strokeWidth="1.600" /></I>} a={["Idioma", 37]} chev />],
        ]} />
      </Group>
      <Group w={285} label="Comentarios" lw={64}>
        <Line c="items-start" x={712} items={[
          [720, 66, <Big w={66} icon={<Bubble />} a={["Nuevo", 35]} b={["comentario", 60]} />],
          [788, 45, <Big w={45} icon={<Bubble gray x />} a={["Eliminar", 43]} dim chev />],
          [835, 156, <div className="flex flex-col">
            <Line c="h-[23px] text-[12.500px] text-[#a9a9a9]" x={835} items={[[838, 15, <I w={15} h={15}><path d="M7 2h7v9H7l-3 3v-3H2V7M7 4H0M3 1 0 4l3 3" stroke="#b0b0b0" /></I>], txt(857, 43, "Anterior")]} />
            <Line c="h-[23px] text-[12.500px] text-[#a9a9a9]" x={835} items={[[838, 15, <I w={15} h={15}><path d="M7 2h7v9H7l-3 3v-3H2V7M0 4h9M6 1l3 3-3 3" stroke="#b0b0b0" /></I>], txt(857, 48, "Siguiente")]} />
            <Line c="h-[23px] w-[156px] border border-[#8a8a8a] bg-[#d2d0ce] text-[12.500px] text-[#333]" x={836} items={[[839, 13, <I w={13} h={14}><path d="M1 1h11v9H6l-3 3v-3H1z" fill="#fff" /></I>], txt(857, 109, "Mostrar comentarios"), [976, 8, <Chev />]]} />
          </div>],
        ]} />
      </Group>
      <Group w={246} label="Seguimiento" lw={64} launcher>
        <Line c="items-start" x={997} items={[
          [1004, 62, <Big w={62} icon={<I w={27}><Sheet /><path d="M24 10l3 3-12 13-4 2 1-5z" fill="#fff" stroke="#2b8ad0" strokeWidth="1.600" /></I>} a={["Control de", 56]} b={["cambios", 44]} chev />],
          [1069, 168, <div className="flex flex-col">
            <div className="flex h-[23px] items-center"><I w={17} h={17}><path d="M1 1h5l3 3v8H1zM9 6h4l3 3v7H9z" fill="#fff" /><path d="M3 5h3M3 8h3M11 11h3" stroke="#d13438" /><path d="M2 13v2h4" stroke="#2b8ad0" /></I>
              <div className="ml-[3px] flex h-[23px] w-[147px] items-center justify-between border border-[#b5b5b5] bg-white pl-[3px] text-[12.500px] text-[#333]"><T w={97}>Revisiones simples</T><div className="flex h-full w-[13px] items-center justify-center border-l border-[#b5b5b5]"><Chev /></div></div></div>
            <Line c={small} x={1069} items={[[1071, 13, <I w={13} h={16}><path d="M1 1h7l4 4v10H1zM8 1v4h4" fill="#fff" /><path d="M3 6h3M3 9h3" stroke="#d13438" /></I>], txt(1089, 95, "Mostrar revisiones"), [1188, 7, <Chev />]]} />
            <Line c={small} x={1069} items={[[1070, 16, <I w={16} h={14}><rect x="1" y="1" width="14" height="12" fill="#fff" /><path d="M1 4h14M5 4v9" /><path d="M4 8h7M8 5l3 3-3 3" stroke="#2b8ad0" strokeWidth="1.500" /></I>], txt(1089, 99, "Panel de revisiones"), [1198, 7, <Chev />]]} />
          </div>],
        ]} />
      </Group>
      <Group w={100} label="Cambios" lw={43}>
        <Line c="items-start" x={1243} items={[
          [1250, 48, <Big w={48} icon={<I w={27}><Sheet /><path d="M8 20l6 8L26 14" stroke="#3a9b4b" strokeWidth="2" /></I>} a={["Aceptar", 42]} chev />],
          [1303, 30, <div className="flex flex-col">
            <div className="flex h-[23px] items-center gap-[6px]"><I w={15} h={16}><path d="M1 1h6l4 4v10H1zM7 1v4h4" fill="#fff" /><path d="M3 5h3M3 8h3M7 8l7 7M14 8l-7 7" stroke="#d13438" strokeWidth="1.500" /></I><Chev /></div>
            <div className="flex h-[23px] items-center"><I w={15} h={16}><path d="M1 1h6l4 4v10H1zM7 1v4h4" fill="#fff" /><path d="M3 5h3M3 8h3" stroke="#d13438" /><path d="M15 12H6M9 9l-3 3 3 3" stroke="#2b8ad0" strokeWidth="1.500" /></I></div>
            <div className="flex h-[23px] items-center"><I w={15} h={16}><path d="M1 1h6l4 4v10H1zM7 1v4h4" fill="#fff" /><path d="M3 5h3M3 8h3" stroke="#d13438" /><path d="M5 12h9M11 9l3 3-3 3" stroke="#2b8ad0" strokeWidth="1.500" /></I></div>
          </div>],
        ]} />
      </Group>
      <Group w={74} label="Comparar" lw={50}><Big w={73} icon={<I w={28}><path d="M10 1h17v26H18" /><path d="M21 8h4M21 12h4M21 16h4" /><rect x="1" y="4" width="18" height="24" fill="#fff" stroke="#1a6ec0" /><path d="M5 11h10M5 16h10M5 21h10" /></I>} a={["Comparar", 53]} chev /></Group>
      <Group w={126} label="Proteger" lw={44}>
        <Line c="items-start" x={1417} items={[
          [1427, 54, <Big w={54} dim icon={<I w={29}><circle cx="13" cy="9" r="8" stroke="#b3b3b3" fill="#ededed" /><path d="M1 29c1-8 6-11 12-11" stroke="#b3b3b3" /><circle cx="21" cy="22" r="7" fill="#e4e4e4" stroke="#b3b3b3" /><path d="M16 17l10 10" stroke="#b3b3b3" /></I>} a={["Bloquear", 47]} b={["autores", 38]} chev />],
          [1482, 54, <Big w={54} icon={<I w={28}><path d="M1 1h12l8 8v4M1 1v28h12M13 1v8h8" /><path d="M17 18v-4c0-4 7-4 7 0v4" stroke="#d87b00" /><rect x="15" y="18" width="12" height="11" fill="#ffd992" stroke="#d87b00" /></I>} a={["Restringir", 50]} b={["edición", 38]} />],
        ]} />
      </Group>
      <Group w={103} label="Entrada de lápiz" lw={83}><Big w={102} icon={<I w={29}><path d="M1 1h23L12 18M1 1v27L12 18" /><path d="M4 19 24 8M5 23c6-2 10-8 12-9 0 4 7-1 9 0M12 28c5-4 8-6 8-3s4 0 8-1" stroke="#d13438" strokeWidth="1.600" /></I>} a={["Ocultar entrada", 82]} b={["de lápiz", 41]} chev /></Group>
      <div className="flex h-[93px] flex-1 items-end justify-end pb-[5px] pr-[9px]"><svg width="10" height="7" viewBox="0 0 10 7"><path d="M1 6l4-4 4 4" fill="none" stroke="#444" strokeWidth="1.400" /></svg></div>
    </div>
  );
}

function Ruler() {
  const nums: Node[] = [];
  for (let i = -3; i <= 17; i++) {
    const x = 121.500 + i * 37.75;
    if (i !== 0) nums.push(<text key={"n" + i} x={x + (i > 0 ? 0 : -1)} y="12.500" textAnchor="middle">{Math.abs(i)}</text>);
    nums.push(<path key={"t" + i} d={`M${x + 18.500} 6v5M${x + 9.500} 7.500v1.500M${x + 28} 7.500v1.500`} stroke="#555" />);
  }
  return (
    <svg width="796" height="24" viewBox="0 0 796 24" fontSize="10" fontFamily="Open Sans" fill="#444">
      <rect x="2" y="4" width="120" height="10" fill="#c6c6c6" /><rect x="122" y="4" width="552" height="10" fill="#fff" /><rect x="674" y="4" width="121" height="10" fill="#c6c6c6" />
      {nums}
      <path d="M111 5v8M113.500 5v8M116 5v8M110 7h8M110 9.500h8M110 12h8M677 5v8M679.500 5v8M682 5v8M676 7h8M676 9.500h8M676 12h8" stroke="#777" strokeWidth=".7" />
      <path d="M118.500 1h8v3l-4 5-4-5zM118.500 15.500v-2l4-5 4 5v2zM118.500 16h8v6h-8zM671 17v-4l4-5 4 5v4z" fill="#fff" stroke="#999" />
    </svg>
  );
}

function Word() {
  const tabs: [number, number, string][] = [[291, 42, "Archivo"], [364.5, 29, "Inicio"], [423, 44, "Insertar"], [496, 42, "Dibujar"], [566.5, 39, "Diseño"], [634.5, 66, "Disposición"], [729, 67, "Referencias"], [825, 99.5, "Correspondencia"], [953, 43, "Revisar"], [1022.5, 28.5, "Vista"], [1080, 36, "Ayuda"], [1146, 55, "ACROBAT"], [1231, 61, "Protección"], [1322, 92, "Diseño de tabla"], [1442, 67, "Disposición"]];
  const st = "#a9bcd9";
  return (
    <div className="flex h-[767px] w-[1439px] flex-col border border-[#7f7f7f] bg-[#f3f2f1]">
      <div className="relative h-[34px] shrink-0 overflow-hidden bg-[#2b579a]">
        <svg className="absolute right-0 top-0" width="500" height="34" viewBox="0 0 500 34" fill="none" stroke="#244b8a" strokeWidth="3.500">
          <circle cx="8" cy="13" r="4" /><path d="M12 13h160l14-8M74 34h90" /><circle cx="68" cy="32" r="4" /><path d="M12 34c4-8 20-8 24 0" /><circle cx="276" cy="16" r="25" strokeWidth="6" /><path d="M262 26 288 4M268 2h20v18" strokeWidth="8" /><path d="M376 34l14-14h90M446 34l34-34M462 34l34-34" />
        </svg>
        <Line x={278} c="relative h-[34px] text-[12px] text-[#c0cee4]" items={[
          txt(298, 77, "Autoguardado"),
          [382, 38, <div className="flex h-[13px] w-[38px] items-center rounded-full border border-white pl-[3px]"><div className="h-[8px] w-[8px] rounded-full bg-white" /></div>],
          [433, 16, <I w={16} h={16}><path d="M1 1h14v14H1zM4 1v6h8V1M5 15v-5h6v5" stroke={st} /></I>],
          [463, 14, <I w={14} h={16}><path d="M1 1v6h6M1 7c3-5 10-6 12-1 1 4-3 7-6 9" stroke={st} /></I>],
          [483, 6, <Chev c="text-[#a9bcd9]" w={6} />],
          [501, 16, <I w={16} h={16}><path d="M4 2C-1 6 1 15 8 15s9-8 4-12M11 1v5h4" stroke={st} /></I>],
          [530, 17, <I w={17} h={16}><path d="M1 2h10M1 2v13h14V8M1 6h7M1 10h5M6 2v12M6 13 16 1M11 12v3" stroke={st} /></I>],
          [560, 14, <I w={14} h={17}><text x="1" y="7" fontSize="8" stroke="none" fill={st} textLength="12" lengthAdjust="spacingAndGlyphs" fontFamily="Open Sans">abc</text><path d="M4 12l3 3 5-6" stroke={st} /></I>],
          [592, 8, <I w={8} h={8}><path d="M1 1h6" stroke={st} /><path d="M1.500 4 4 7l2.500-3z" fill={st} stroke="none" /></I>],
          txt(688, 31, "read..."),
          [732, 7, <I w={7} h={6}><path d="M0 1h7L3.500 5z" fill="#c0cee4" stroke="none" /></I>],
          [821, 366, <div className="flex h-[23px] w-[366px] items-center bg-[#a6b8d4] pl-[19px] text-[#2b579a]"><I w={14} h={14}><circle cx="9" cy="5" r="4.300" stroke="#2b579a" /><path d="M6 8 1 13" stroke="#2b579a" /></I><div className="w-[16px]" /><T w={77}>Buscar (Alt+Q)</T></div>],
          txt(1250, 188, "LUIS ANTONIO SARABIA PEINADOR"),
          [1449, 24, <div className="flex h-[24px] w-[24px] items-center justify-center rounded-full bg-[#986f0b] text-[10.500px] text-white">LA</div>],
          [1500, 17, <I w={17} h={17}><path d="M2 15 9 3l5 3-7 10H2zM14 1l-2 3M17 4l-3 1M17 8h-2" stroke="#c0cee4" /></I>],
          [1547, 13, <I w={13} h={11}><path d="M.7.7h11.600v9.600H.7zM.7 3h11.600M6.500 9V5M4.500 7l2-2 2 2" stroke="#c0cee4" /></I>],
          [1595, 10, <div className="h-px w-[10px] bg-[#d5dfee]" />],
          [1641, 10, <div className="h-[10px] w-[10px] border border-[#d5dfee]" />],
          [1687, 10, <I w={10} h={10}><path d="M0 0l10 10M10 0 0 10" stroke="#d5dfee" /></I>],
        ]} />
      </div>
      <Line x={278} c="h-[34px] shrink-0 text-[13px] text-[#444]" items={[
        ...tabs.map(([s, w, t]): Item => [s, w, <div className={"flex flex-col " + (s >= 1322 || t === "Revisar" ? "text-[#2b579a]" : "")}><div className="h-[5px]" /><T w={w} c="h-[21px]">{t}</T><div className={"h-[3px] " + (t === "Revisar" ? "bg-[#2b579a]" : "")} /></div>]),
        [1631, 31, <div className="mt-[-2px] flex h-[23px] w-[31px] items-center justify-center rounded-[2px] border border-[#e1dfdd] bg-white"><I w={12} h={12}><path d="M1 1h10v7H5l-2 3V8H1z" stroke="#2b579a" /></I></div>],
        [1671, 31, <div className="mt-[-2px] flex h-[23px] w-[31px] items-center justify-center rounded-[2px] border border-[#e1dfdd] bg-white"><I w={13} h={12}><path d="M4 4H1v7h9V8M4 8c0-3 2-4 5-4V1l3 4-3 3V6" stroke="#2b579a" /></I></div>],
      ]} />
      <Ribbon />
      <div className="flex flex-1 flex-col overflow-hidden border-t border-[#c8c6c4] bg-[#e6e6e6]">
        <div className="flex h-[24px] shrink-0 items-start">
          <div className="flex h-[20px] w-[22px] items-center justify-center bg-[#dadada]"><div className="flex h-[14px] w-[15px] items-center justify-center bg-white"><div className="h-[6px] w-[5px] border-b-2 border-l-2 border-[#555]" /></div></div>
          <div className="ml-[299px] mt-[2px]"><Ruler /></div>
        </div>
        <div className="ml-[326px] flex h-[558px] w-[792px] flex-col border-x border-[#c6c6c6] bg-white text-[13.800px] text-black">
          <div className="flex h-[4px] items-start gap-[188px] pl-[258px]"><div className="h-[3px] w-[6px] rounded-b border-b-[1.500px] border-black" /><div className="h-[2px] w-[2px] -skew-x-12 bg-black" /></div>
          <div className="flex h-[20px] items-center pl-[313px]"><T w={163}>gradient multisegmented</T></div>
          <div className="mt-[19px] flex flex-col pl-[111px] leading-[19.500px]">
            <T w={523}>After select the parameters and press the “OK” button the composition of phase</T>
            <T w={532}>mobile and the profile of temporal profile are displayed graphically and saved in a</T>
            <T w={235}>folder as is shown in figures 6 and 7.</T>
          </div>
          <div className="ml-[111px] mt-[115px] flex h-[268px] w-[583px] shrink-0 overflow-hidden bg-[linear-gradient(180deg,#0a9cf0_0,#0a6cd0_3px,#1a80d8_4px,#1a80d8_8px,#f0f0f0_9px)]">
            <div className="mt-[8px] h-[260px] w-[291px] shrink-0"><div className="origin-top-left scale-x-[0.505] scale-y-[0.506]"><FigureWindow on={false} n={1} shift={1}><Ternary label={<><text x="59" y="111" fill="#222" textLength="27" lengthAdjust="spacingAndGlyphs">chr</text><text x="86" y="121" fontSize="14" fill="#222">m</text><text x="98" y="111" fill="#222" textLength="52" lengthAdjust="spacingAndGlyphs">amual</text></>} /></FigureWindow></div></div>
            <div className="mt-[6px] h-[260px] w-[291px] shrink-0"><div className="origin-top-left scale-x-[0.507] scale-y-[0.508]"><FigureWindow on n={2} shift={0}><Profile /></FigureWindow></div></div>
          </div>
        </div>
      </div>
      <Line x={278} c="h-[22px] shrink-0 border-t border-[#c8c6c4] text-[12px] text-[#444]" items={[
        txt(285, 69, "Página 3 de 5"), txt(373, 65, "275 palabras"),
        [457, 14, <I w={14} h={13}><path d="M1 1h5l1 1 1-1h5v6M1 1v11h5l1-1V2M8 7l6 6M14 7l-6 6" /></I>],
        txt(489, 104, "Inglés (Reino Unido)"),
        [613, 14, <I w={14} h={14}><circle cx="7" cy="2.500" r="1.700" /><path d="M1 5l4 1v3l-2 5M12 5 9 6v3M5 6h4M8 8l6 6M14 8l-6 6" /></I>],
        txt(631, 189, "Accesibilidad: es necesario investigar"),
        [1300, 14, <I w={14} h={14}><path d="M3 1H1v12h2M11 1h2v12h-2M4 3h4l2 2v6H4z" /></I>],
        txt(1317, 74, "Concentración"),
        [1417, 13, <I w={13} h={12}><path d="M1 1h4.500l1 1 1-1H12v10H7.500l-1 1-1-1H1zM6.500 2v10M2.500 4h2M2.500 6h2M2.500 8h2M8.500 4h2M8.500 6h2M8.500 8h2" /></I>],
        [1444, 40, <div className="flex h-[21px] w-[40px] items-center justify-center bg-[#cfcfcf]"><I w={12} h={14}><path d="M1 1h10v12H1zM3 4h6M3 6h6M3 8h6M3 10h6" /></I></div>],
        [1497, 14, <I w={14} h={14}><path d="M1 1h12v5M1 1v11h5M3 4h8M3 6h5M3 8h3" /><circle cx="10" cy="10" r="3.300" fill="#999" /></I>],
        [1530, 8, <div className="h-px w-[8px] bg-[#444]" />],
        [1543, 100, <div className="flex h-[12px] w-[100px] items-center justify-center bg-[linear-gradient(#666,#666)] bg-[length:100%_1px] bg-center bg-no-repeat"><div className="h-[11px] w-[5px] bg-[#6e6e6e]" /></div>],
        [1648, 8, <I w={8} h={8}><path d="M4 0v8M0 4h8" /></I>],
        txt(1669, 27, "100%"),
      ]} />
    </div>
  );
}

/* ---------- file explorer peeking out behind Word ---------- */
function ExplorerBack() {
  return (
    <div className="flex h-[611px] w-[1506px] flex-col border border-[#4a5a6a] bg-[#1a80d8] px-[7px] pb-[7px]">
      <Line x={226} c="h-[29px] shrink-0" items={[[235, 14, <div className="h-[17px] w-[13px] border border-[#e3b93a] bg-[#ffe07a]" />], [257, 2, <div className="h-[13px] w-[2px] bg-[#6fa8d8]" />], [269, 14, <div className="h-[16px] w-[14px] bg-white"><svg width="14" height="16" viewBox="0 0 14 16"><path d="M2 8l3 4 7-8" stroke="#d8551c" strokeWidth="2" fill="none" /></svg></div>]]} />
      <div className="flex h-[24px] shrink-0 items-center border-t border-[#d0e0f0] bg-[#1b5f9b] pl-[9px] text-[12px] text-white"><T w={38}>Archivo</T></div>
      <div className="flex h-[92px] shrink-0 flex-col border-b border-[#d9dadb] bg-[#f4f6f8] pl-[8px] text-[11.500px] leading-[13px] text-[#5c6670]">
        <svg width="48" height="28" viewBox="0 0 48 28" className="mt-[10px]"><path d="M26 20 33 12 29 9 36 3l8 9-6 4-3-2-6 8z" fill="#a9bcd2" /></svg>
        <div className="mt-[5px] pl-[14px]"><T w={28}>Ancla</T></div>
        <T w={42}>Acceso r</T>
      </div>
      <div className="flex flex-1 flex-col overflow-hidden bg-white">
        <div className="flex h-[40px] shrink-0 items-center pl-[13px]"><svg width="60" height="12" viewBox="0 0 60 12" fill="none" strokeWidth="2"><path d="M13 6H1M6 1 1 6l5 5" stroke="#555" /><path d="M30 6h13" stroke="#ccc" /></svg></div>
        <div className="mt-[8px] pl-[32px]"><ExplorerIcon s={17} /></div>
        <div className="mb-[10px] mt-[12px] ml-[33px] h-[7px] w-[16px] rounded-[1px] bg-[#444c52]" />
        {Array.from({ length: 15 }, (_, i) => <div key={i} className={"flex h-[24px] shrink-0 items-center pl-[42px] " + (i === 13 ? "border-y border-[#d9d9d9] bg-[#f0f0f0]" : "")}><div className="h-[16px] w-[18px] border border-[#e3bd4c] bg-[#ffe699]" /></div>)}
      </div>
      <div className="flex h-[25px] shrink-0 items-center bg-white pl-[14px] text-[12px] text-[#334]"><T w={36}>15 elen</T></div>
    </div>
  );
}
function ExplorerEdge() {
  return (
    <div className="flex h-[611px] w-[30px] flex-col border border-[#4a5a6a] bg-[#1a80d8] pb-[7px] pr-[7px]">
      <div className="h-[30px] shrink-0 border-r border-[#3a6ea0]" />
      <div className="flex h-[24px] shrink-0 items-center justify-end bg-white pr-[3px]"><div className="h-[14px] w-[16px] rounded-full bg-[#0f63b4]" /></div>
      <div className="h-[92px] shrink-0 border-b border-[#d9dadb] bg-[#f4f6f8]" />
      <div className="h-[43px] shrink-0 bg-white" />
      <div className="flex h-[17px] shrink-0 items-center justify-center border border-[#ccc] bg-white"><Chev /></div>
      <div className="h-[197px] shrink-0 border border-[#a8a8a8] bg-[#dcdcdc]" />
      <div className="h-[143px] shrink-0 bg-white" />
      <div className="h-[17px] shrink-0 border border-[#ccc] bg-white" />
      <div className="flex-1 bg-white" />
    </div>
  );
}

/* ---------- MATLAB main window ---------- */
const Mag = ({ c = "#2b6fb0" }) => <svg width="14" height="14" viewBox="0 0 14 14"><circle cx="8.500" cy="5" r="3.800" fill="#e6f0fa" stroke={c} strokeWidth="1.600" /><path d="M5.500 8 1 13" stroke={c} strokeWidth="2.200" /></svg>;
const CircDown = () => <svg width="13" height="13" viewBox="0 0 13 13"><circle cx="6.500" cy="6.500" r="5.500" fill="none" stroke="#555" /><path d="M3.500 4.500h6l-3 4.500z" fill="#555" /></svg>;
const Ch = ({ s = false }) => <svg width="15" height="15" viewBox="0 0 15 15"><rect x=".5" y=".5" width="14" height="14" fill="#f7efa0" stroke="#5f95b8" /><rect x="1" y="1" width="6" height="13" fill="#e4f0e6" />{s ? <path d="M2 7.500h5M8 3v9M8 3h4M8 7.500h4M8 12h4" stroke="#46708c" fill="none" /> : <><path d="M7.500 1v13" stroke="#5f95b8" /><text x="1.500" y="10" fontSize="8" fill="#333" fontFamily="Liberation Sans">c</text><text x="8.800" y="10" fontSize="8" fill="#333" fontFamily="Liberation Sans">h</text></>}</svg>;
const Arrow = ({ r = 0 }) => <svg width="8" height="10" viewBox="0 0 8 10" style={{ transform: `rotate(${r}deg)` }}><path d="M6 1 2 5l4 4" fill="none" stroke="#555" strokeWidth="1.500" /></svg>;
const Grip = () => <div className="flex gap-[1px]"><div className="h-[7px] w-[2px] bg-[#666]" /><div className="h-[7px] w-[2px] bg-[#666]" /><div className="h-[7px] w-[2px] bg-[#666]" /></div>;

function MatlabMain() {
  return (
    <div className="flex h-[733px] w-[1366px] flex-col border border-[#56616c] bg-[#8bb5d8] px-[7px] pb-[7px]">
      <div className="flex h-[30px] shrink-0 items-start justify-between bg-[#1a80d8]">
        <div className="pl-[8px] pt-[6px]"><Matlab s={18} /></div>
        <CapBtns on={false} w="w-[46px] " h="h-[29px]" />
      </div>
      <div className="flex h-[29px] shrink-0 items-center justify-end bg-[#004074] pr-[10px] text-[12.500px] text-white">
        <div className="flex h-[23px] w-[200px] items-center justify-between bg-white pl-[64px] pr-[3px] text-[#777]"><T w={69}>Documentation</T><Mag /></div>
        <svg width="16" height="18" viewBox="0 0 16 18" className="ml-[8px]"><path d="M3 12c2-2 1-9 4.500-9S10 10 13 12z" fill="#f6c445" stroke="#c58c14" strokeWidth=".6" /><circle cx="7.500" cy="14" r="1.800" fill="#f6c445" /><circle cx="12" cy="4.500" r="3.300" fill="#cf2a1c" /></svg>
        <div className="ml-[14px]"><T w={35}>Sign In</T></div>
      </div>
      <div className="flex h-[92px] shrink-0 items-center justify-between border-b border-[#888] bg-[#e6e6e6] pl-[8px] text-[12.500px] leading-[16px] text-[#333]">
        <div className="flex flex-col pt-[20px]"><T w={15}>Ne</T><T w={12} c="ml-[2px]">Se</T></div>
        <svg width="12" height="14" viewBox="0 0 12 14" className="mr-[7px] mt-[66px]"><path d="M1 2h10" stroke="#888" strokeWidth="2.500" /><path d="M6 4l5 8H1z" fill="#888" /></svg>
      </div>
      <div className="flex h-[26px] shrink-0 items-center justify-between bg-[#f0f0f0] pl-[2px] pr-[3px]">
        <svg width="18" height="14" viewBox="0 0 18 14"><path d="M1 7 8 1v3h9v6H8v3z" fill="#a9d3ea" stroke="#46779a" /></svg>
        <div className="flex items-center"><div className="flex h-[21px] w-[1200px] items-center justify-end border border-[#c2c2c2] bg-white pr-[4px]"><svg width="8" height="6" viewBox="0 0 8 6"><path d="M0 0h8L4 5z" /></svg></div><div className="flex h-[21px] w-[22px] items-center justify-center rounded-r border border-[#a9b7c8] bg-[#e4ebf5]"><Mag /></div></div>
      </div>
      <div className="flex flex-1 bg-[#f0f0f0] pb-[27px] pl-[2px] pr-[1px]">
        <div className="flex w-[294px] flex-col">
          <div className="flex h-[20px] shrink-0 items-center border border-[#ccc] bg-[#fafafa] pl-[6px] text-[12.500px] text-[#333]"><T w={14}>Cu</T></div>
          <div className="flex h-[281px] shrink-0 flex-col border-l border-[#bbb] bg-white"><div className="h-[22px] border border-[#ddd] bg-[#fafafa]" /></div>
          <div className="flex h-[22px] shrink-0 items-center border-t border-[#777] bg-[#f6f6f6] pl-[4px] text-[12.500px] text-black [-webkit-text-stroke:0.3px_#000]"><T w={13}>ch</T></div>
          <div className="flex flex-1 flex-col border-2 border-[#8b8f98] bg-white text-[12.500px] text-black [-webkit-text-stroke:0.3px_#000]">
            <div className="flex h-[22px] shrink-0 items-center border-b border-[#ddd] bg-[#fafafa] pl-[4px]"><svg width="15" height="15" viewBox="0 0 15 15"><path d="M.5.5h14v14H.5zM7.500 0v15M0 7.500h15" fill="none" stroke="#555" /></svg></div>
            {([["answer", 45, "'Manual'", 54], ["chr_mamual", 78, "1x1 struct", 63], ["str", 15, "'chr_mamual'", 86]] as [string, number, string, number][]).map((r, i) => (
              <div key={r[0]} className="flex h-[22px] items-center pl-[2px]"><div className="w-[20px] shrink-0"><Ch s={i === 1} /></div><div className="w-[137px] shrink-0 border-r border-[#e3e3e3]"><T w={r[1]}>{r[0]}</T></div><T w={r[3]}>{r[2]}</T></div>
            ))}
          </div>
        </div>
        <div className="ml-[7px] flex w-[765px] flex-col">
          <div className="h-[420px] shrink-0 border-2 border-[#9a9da4] bg-white" />
          <div className="mt-[7px] flex flex-1 flex-col border border-[#c4c4c4]">
            <div className="flex h-[19px] shrink-0 items-center justify-between border-b border-[#d8d8d8] bg-[#fafafa] pl-[4px] pr-[7px] text-[12.500px] text-[#444]"><T w={104}>Command Window</T><CircDown /></div>
            <div className="flex flex-1">
              <div className="flex w-[19px] items-end justify-center bg-[#f0f0f0] pb-[15px] font-['Liberation_Serif'] text-[15px] italic leading-[18px] text-[#222]">fx</div>
              <div className="flex w-[725px] flex-col bg-white">
                <div className="h-[57px] pl-[4px] pt-[4px] font-['Liberation_Mono'] text-[13px] leading-[18px] text-black">
                  <div className="h-[18px]"><T w={56}>{">> menu"}</T></div>
                  <div className="h-[18px]"><T w={388}>{">> load("}<span className="text-[#a020f0]">{"'E:\\funciones\\chr_mamual\\chr_mamual.mat'"}</span>)</T></div>
                  <div className="h-[18px]"><T w={16}>{">>"}</T></div>
                </div>
                <div className="flex h-[16px] border border-[#b5b5b5]"><div className="flex w-[16px] items-center justify-center"><Arrow /></div><div className="flex w-[614px] items-center justify-center border-x border-[#999] bg-[#dcdcdc]"><Grip /></div><div className="flex-1" /><div className="flex w-[17px] items-center justify-center border-l border-[#bbb]"><Arrow r={180} /></div></div>
              </div>
              <div className="flex flex-1 flex-col"><div className="flex h-[16px] items-center justify-center border border-[#bbb] bg-white"><Arrow r={90} /></div><div className="h-[21px] border-x border-[#bbb] bg-white" /><div className="h-[4px] border border-[#999] bg-[#dcdcdc]" /><div className="flex h-[16px] items-center justify-center border border-[#bbb] bg-white"><Arrow r={-90} /></div></div>
            </div>
          </div>
        </div>
        <div className="ml-[6px] flex flex-1 flex-col">
          <div className="flex h-[20px] shrink-0 items-center justify-end border border-[#ccc] bg-[#fafafa] pr-[6px]"><CircDown /></div>
          <div className="flex flex-1 flex-col border-2 border-[#8b8f98] bg-white text-[12.500px] text-black">
            <div className="flex h-[25px] shrink-0 items-center border-b border-[#ddd] bg-[#fafafa] text-[11.500px]"><div className="h-full w-[156px] border-r border-[#ccc]" /><div className="pl-[5px]"><T w={30}>Value</T></div></div>
            <div className="flex h-[21px] items-center pl-[160px] pt-[4px] [-webkit-text-stroke:0.3px_#000]"><T w={55}>'Manual'</T></div>
            <div className="flex h-[21px] items-center pt-[2px] italic text-[#1c5c98]"><div className="h-[21px] w-[108px] bg-[#aaa]" /><div className="pl-[54px]"><T w={61}>1x1 struct</T></div></div>
            <div className="flex h-[21px] items-center pl-[160px] pt-[2px] [-webkit-text-stroke:0.3px_#000]"><T w={85}>'chr_mamual'</T></div>
            <div className="flex-1" />
            <div className="flex h-[17px] shrink-0 border border-[#b5b5b5]"><div className="flex w-[16px] items-center justify-center"><Arrow /></div><div className="flex w-[210px] items-center justify-center border-x border-[#999] bg-[#dcdcdc]"><Grip /></div><div className="flex-1" /><div className="flex w-[17px] items-center justify-center border-l border-[#bbb]"><Arrow r={180} /></div></div>
          </div>
        </div>
      </div>
      <div className="-mt-[27px] flex h-[27px] shrink-0 items-center gap-[1px] bg-[#f0f0f0] pl-[6px]">
        {[0, 1, 2, 3].map((i) => <div key={i} className="h-[15px] w-[3px] bg-[linear-gradient(#999,#ddd)]" />)}
        <svg width="5" height="4" viewBox="0 0 5 4" className="ml-[2px]"><path d="M2.500 0 5 4H0z" /></svg><div className="ml-[3px] h-[19px] w-px bg-[#999]" />
        <div className="flex-1" />
        <svg width="12" height="12" viewBox="0 0 12 12" className="mr-[1px] mt-[12px]"><path d="M8 1h2v2H8zM4 5h2v2H4zM8 5h2v2H8zM0 9h2v2H0zM4 9h2v2H4zM8 9h2v2H8z" fill="#b5b0a0" /></svg>
      </div>
    </div>
  );
}

export default function App() {
  const w = "#e8e8e8";
  return (
    <div className="relative h-[1080px] w-[3286px] overflow-hidden bg-black font-['Open_Sans','Noto_Sans',sans-serif]">
      <div className="absolute left-0 top-0 h-[1080px] w-[1920px] overflow-hidden bg-[linear-gradient(92deg,#00aafd_0%,#00b2fc_30%,#00a4f4_42%,#0084e2_57%,#0062d0_70%,#004cc6_83%,#003ab6_100%)]">
        <svg className="absolute left-0 top-0" width="1920" height="170" viewBox="0 0 1920 170">
          <defs><linearGradient id="ray" x1="0" x2="1" y1="0" y2="0"><stop offset="0" stopColor="#0078e8" stopOpacity=".28" /><stop offset="1" stopColor="#0050d0" stopOpacity="0" /></linearGradient></defs>
          <path d="M274 0 920 170H1700V0z" fill="url(#ray)" /><path d="M274 0 880 160" stroke="#49b6ff" strokeWidth="1.500" opacity=".4" />
        </svg>
        <div className="absolute left-[-1px] top-0"><DesktopIcons /></div>
        <div className="absolute left-[1701px] top-[226px]"><ExplorerEdge /></div>
        <div className="absolute left-[218px] top-[219px] w-[1300px] overflow-hidden"><ExplorerBack /></div>
        <div className="absolute left-[277px] top-[158px]"><Word /></div>
        <div className="absolute left-0 top-[1050px] w-[1920px] bg-[linear-gradient(90deg,#21363f,#1f313f_60%,#1b2440)]">
          <Taskbar tray={<div className="flex items-center gap-[15px] pr-[6px] text-[12px] text-white"><PenIcon /><T w={27}>14:06</T></div>} />
        </div>
      </div>
      <div className="absolute left-[1920px] top-[95px] h-[768px] w-[1366px] overflow-hidden bg-[linear-gradient(90deg,#00a2f8,#0090ec_40%,#0048c4_75%,#0038b4)]">
        <div className="absolute left-0 top-[5px]"><MatlabMain /></div>
        <div className="absolute left-[606px] top-[12px]"><FigureWindow on={false} n={2} shift={0}><Profile /></FigureWindow></div>
        <div className="absolute left-[28px] top-[15px]"><FigureWindow on n={1} shift={1}><Ternary label={<text x="59" y="114.500" fill="#111" textLength="91" lengthAdjust="spacingAndGlyphs">chr manual</text>} /></FigureWindow></div>
        <div className="absolute bottom-0 left-0 w-[1366px] bg-[linear-gradient(90deg,#20343c,#3a3d40_18%,#434343_40%,#3c3c3c)]">
          <Taskbar tray={
            <Line x={2777} c="w-[509px] pt-[1px] text-[13px] text-[#f0f0f0]" items={[
              [2910, 23, <svg width="22" height="16" viewBox="0 0 22 16"><path d="M5 15a5 5 0 0 1 0-9 7 7 0 0 1 13 1 4 4 0 0 1 0 8z" fill="#cfe7fb" /><path d="M9 15c-1-6 8-8 9-3 4 0 4 3 1 3z" fill="#8fc4f0" /></svg>],
              txt(2941, 21, "7°C"), txt(2971, 53, "Nublado"),
              [3036, 12, <svg width="12" height="8" viewBox="0 0 12 8"><path d="M1 7l5-5 5 5" fill="none" stroke={w} strokeWidth="1.400" /></svg>],
              [3058, 15, <svg width="15" height="12" viewBox="0 0 15 12" fill="none" stroke={w}><path d="M1 4h2l4-3v10L3 8H1zM9 4l5 5M14 4 9 9" /></svg>],
              [3084, 12, <svg width="12" height="16" viewBox="0 0 12 16" fill="none" stroke={w} strokeWidth="1.200"><rect x="1" y="5" width="7" height="7" rx="2" /><path d="M8 8l3-2v5l-3-2M3 1h6M3 15h6M2 3c2-2 6-2 8 0" /></svg>],
              [3106, 17, <svg width="17" height="14" viewBox="0 0 17 14" fill="none" stroke={w} strokeWidth="1.300"><path d="M4 2h12v8H4zM7 13h6M10 10v3M1 1h4v4H1z" /></svg>],
              [3134, 16, <PenIcon />],
              txt(3166, 18, "ESP", "text-[12px] text-[#0c0c0c]"), txt(3201, 27, "14:06", "text-[12px] text-[#0c0c0c]"),
              [3244, 17, <svg width="17" height="17" viewBox="0 0 17 17"><path d="M1 1h15v12h-5l-3 3v-3H1z" fill="#fff" /><path d="M4 5h9M4 7.500h9M4 10h6" stroke="#444" /></svg>],
              [3281, 1, <div className="h-[28px] w-px bg-[#777]" />],
            ]} />} />
        </div>
      </div>
    </div>
  );
}
